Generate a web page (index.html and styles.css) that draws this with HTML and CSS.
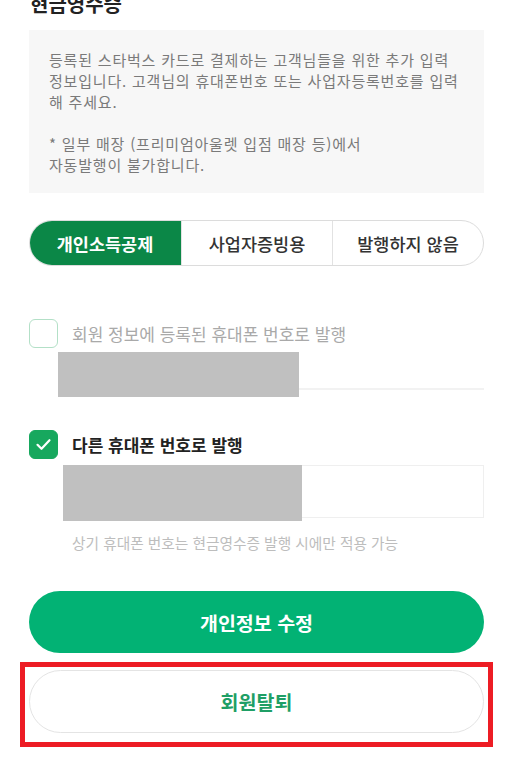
FILE: index.html
```html
<!DOCTYPE html>
<html lang="ko">
<head>
<meta charset="utf-8">
<link rel="stylesheet" href="styles.css">
</head>
<body>
<div class="page">
  <h1 class="title">현금영수증</h1>
  <div class="notice">
    <p>등록된 스타벅스 카드로 결제하는 고객님들을 위한 추가 입력<br>정보입니다. 고객님의 휴대폰번호 또는 사업자등록번호를 입력<br>해 주세요.</p>
    <p>* 일부 매장 (프리미엄아울렛 입점 매장 등)에서<br>자동발행이 불가합니다.</p>
  </div>

  <div class="segment">
    <div class="seg seg-on">개인소득공제</div>
    <div class="seg">사업자증빙용</div>
    <div class="seg">발행하지 않음</div>
  </div>

  <div class="check-row first">
    <span class="box"></span>
    <span class="label muted">회원 정보에 등록된 휴대폰 번호로 발행</span>
  </div>
  <div class="line-input">
    <span class="redact redact-1"></span>
  </div>

  <div class="check-row second">
    <span class="box box-on">
      <svg width="29" height="29" viewBox="0 0 29 29"><path d="M8.5 14.8l4 4 8-8.6" fill="none" stroke="#fff" stroke-width="2.2" stroke-linecap="round" stroke-linejoin="round"/></svg>
    </span>
    <span class="label strong">다른 휴대폰 번호로 발행</span>
  </div>
  <div class="box-input">
    <span class="redact redact-2"></span>
  </div>
  <p class="hint">상기 휴대폰 번호는 현금영수증 발행 시에만 적용 가능</p>

  <button class="btn btn-primary">개인정보 수정</button>
  <div class="highlight">
    <button class="btn btn-outline">회원탈퇴</button>
  </div>
</div>
</body>
</html>
```

FILE: styles.css
```css
* { box-sizing: border-box; }
html, body {
  margin: 0;
  padding: 0;
  background: #fff;
  overflow: hidden;
}
body {
  font-family: "Noto Sans CJK KR", "Noto Sans", sans-serif;
  color: #222;
}
.page {
  width: 515px;
  padding: 0 31px 0 29px;
}
.title {
  margin: -8px 0 0 1px;
  font-size: 20px;
  line-height: 24px;
  font-weight: 700;
  color: #222;
}
.notice {
  margin-top: 14px;
  background: #f7f7f7;
  padding: 19px 6px 17px 20px;
  height: 163px;
}
.notice p {
  margin: 0;
  font-size: 15px;
  line-height: 21px;
  letter-spacing: 0.8px;
  color: #7a7a7a;
  white-space: nowrap;
}
.notice p + p { margin-top: 21px; }

.segment {
  margin-top: 27px;
  display: grid;
  grid-template-columns: 1fr 1fr 1fr;
  height: 46px;
  border: 1px solid #dcdcdc;
  border-radius: 23px;
  overflow: hidden;
}
.seg {
  display: flex;
  align-items: center;
  justify-content: center;
  font-size: 17.5px;
  font-weight: 500;
  color: #333;
}
.seg + .seg { border-left: 1px solid #e2e2e2; }
.seg-on {
  background: #0b8747;
  color: #fff;
  font-weight: 700;
  margin: -1px 0 -1px -1px;
}

.check-row {
  display: flex;
  align-items: center;
  gap: 14px;
  height: 29px;
}
.check-row.first { margin-top: 53px; }
.check-row.second { margin-top: 40px; }
.box {
  width: 29px;
  height: 29px;
  border: 1.5px solid #b3e0c7;
  border-radius: 6px;
  flex: none;
  display: flex;
  align-items: center;
  justify-content: center;
}
.box-on {
  background: #17a85e;
  border-color: #17a85e;
}
.box-on svg { margin: -1.5px; }
.label { font-size: 17px; }
.label.muted { color: #a9a9a9; }
.label.strong { color: #222; font-weight: 700; }

.line-input {
  position: relative;
  margin: 1px 0 0 29px;
  height: 41px;
  border-bottom: 2px solid #f2f2f2;
}
.redact {
  position: absolute;
  background: #c0c0c0;
}
.redact-1 { left: 0; top: 3px; width: 241px; height: 45px; }

.box-input {
  position: relative;
  margin: 6px 0 0 34px;
  height: 53px;
  border: 1.5px solid #efefef;
}
.redact-2 { left: -1.5px; top: -1.5px; width: 239px; height: 56px; }

.hint {
  margin: 15px 0 0 43px;
  font-size: 14.7px;
  line-height: 20px;
  color: #bdbdbd;
  white-space: nowrap;
}

.btn {
  display: block;
  width: 100%;
  font-family: inherit;
  font-size: 19.5px;
  font-weight: 700;
  cursor: pointer;
}
.btn-primary {
  margin-top: 38px;
  height: 62px;
  border: none;
  border-radius: 31px;
  background: #02b274;
  color: #fff;
}
.highlight {
  margin: 9px 0 0 -9px;
  width: 473px;
  border: 5px solid #ed1c24;
  padding: 3px 4px 9px 4px;
}
.btn-outline {
  height: 63px;
  border: 1.5px solid #e4e4e4;
  border-radius: 32px;
  background: #fff;
  color: #1f9f66;
}
```
